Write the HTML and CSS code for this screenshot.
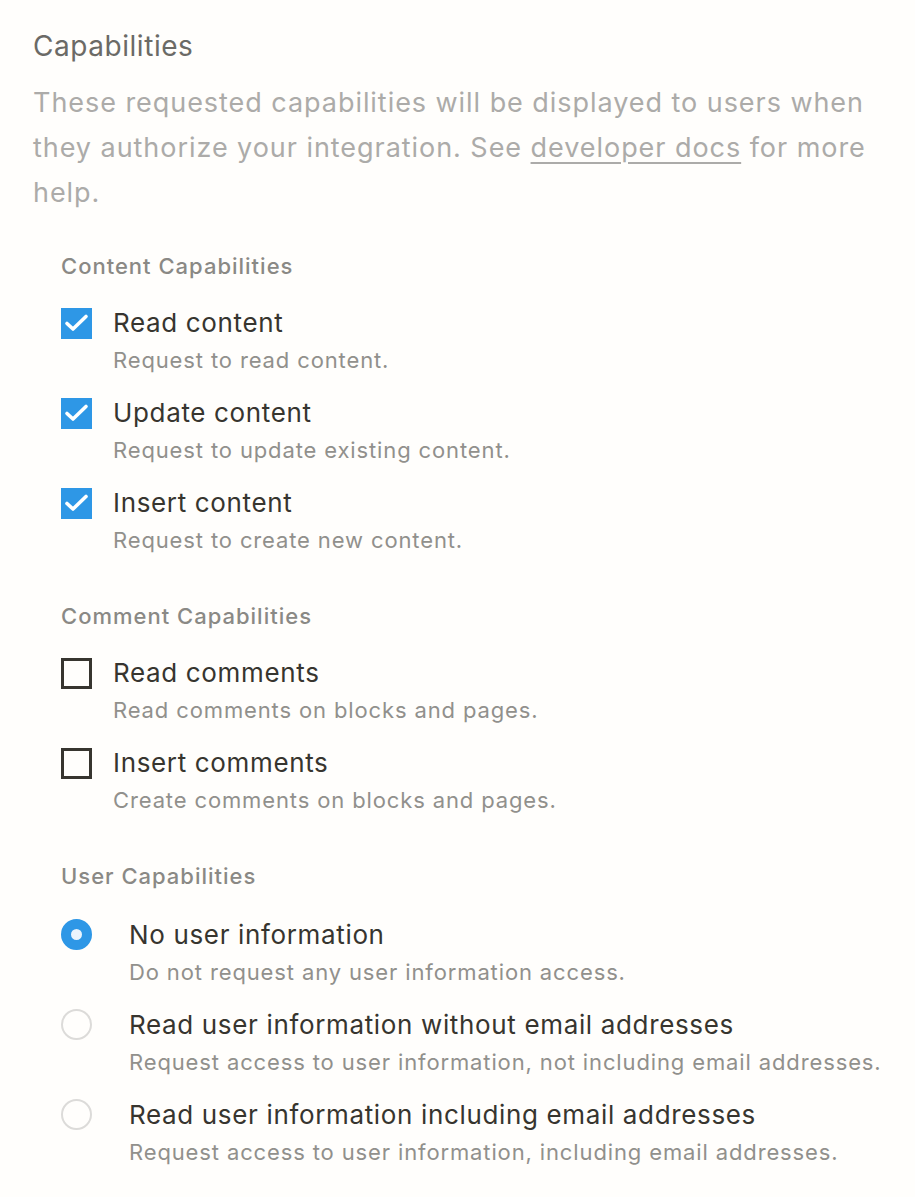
FILE: index.html
```html
<!DOCTYPE html>
<html>
<head>
<meta charset="utf-8">
<link rel="stylesheet" href="styles.css">
</head>
<body>
<div class="page">
  <div class="title">Capabilities</div>
  <p class="intro">These requested capabilities will be displayed to users when they authorize your integration. See <a class="link" href="#">developer docs</a> for more help.</p>

  <div class="section">
    <div class="section-title">Content Capabilities</div>
    <div class="option">
      <span class="box checked"><svg viewBox="0 0 31 31" width="31" height="31"><path d="M6 15.5l6 5.5 13-12.5" fill="none" stroke="#fff" stroke-width="3.6" stroke-linecap="round" stroke-linejoin="round"/></svg></span>
      <div class="text"><div class="label">Read content</div><div class="desc">Request to read content.</div></div>
    </div>
    <div class="option">
      <span class="box checked"><svg viewBox="0 0 31 31" width="31" height="31"><path d="M6 15.5l6 5.5 13-12.5" fill="none" stroke="#fff" stroke-width="3.6" stroke-linecap="round" stroke-linejoin="round"/></svg></span>
      <div class="text"><div class="label">Update content</div><div class="desc">Request to update existing content.</div></div>
    </div>
    <div class="option">
      <span class="box checked"><svg viewBox="0 0 31 31" width="31" height="31"><path d="M6 15.5l6 5.5 13-12.5" fill="none" stroke="#fff" stroke-width="3.6" stroke-linecap="round" stroke-linejoin="round"/></svg></span>
      <div class="text"><div class="label">Insert content</div><div class="desc">Request to create new content.</div></div>
    </div>
  </div>

  <div class="section">
    <div class="section-title">Comment Capabilities</div>
    <div class="option">
      <span class="box"></span>
      <div class="text"><div class="label">Read comments</div><div class="desc">Read comments on blocks and pages.</div></div>
    </div>
    <div class="option">
      <span class="box"></span>
      <div class="text"><div class="label">Insert comments</div><div class="desc">Create comments on blocks and pages.</div></div>
    </div>
  </div>

  <div class="section">
    <div class="section-title">User Capabilities</div>
    <div class="option radio-option">
      <span class="radio selected"></span>
      <div class="text"><div class="label">No user information</div><div class="desc">Do not request any user information access.</div></div>
    </div>
    <div class="option radio-option">
      <span class="radio"></span>
      <div class="text"><div class="label">Read user information without email addresses</div><div class="desc">Request access to user information, not including email addresses.</div></div>
    </div>
    <div class="option radio-option">
      <span class="radio"></span>
      <div class="text"><div class="label">Read user information including email addresses</div><div class="desc">Request access to user information, including email addresses.</div></div>
    </div>
  </div>
</div>
</body>
</html>
```

FILE: styles.css
```css
html, body {
  margin: 0;
  padding: 0;
  background: #fffefc;
}
body {
  font-family: Inter, "Noto Sans", "Liberation Sans", sans-serif;
  color: #37352f;
}
.page {
  padding: 28px 33px 0 33px;
}
.title {
  font-size: 28px;
  line-height: 36px;
  letter-spacing: 0.55px;
  color: #6b6a66;
}
.intro {
  margin: 16px 0 36px 0;
  font-size: 27px;
  line-height: 45px;
  letter-spacing: 0.95px;
  color: #acaba9;
}
.link {
  color: #acaba9;
  text-decoration: underline;
  text-decoration-thickness: 2px;
  text-underline-offset: 5px;
}
.section {
  padding-left: 28px;
  margin-top: 25px;
}
.section-title {
  font-size: 22px;
  line-height: 30px;
  letter-spacing: 1px;
  color: #8a8985;
  font-weight: 500;
  margin-bottom: 25px;
}
.option {
  display: flex;
  align-items: flex-start;
  gap: 21px;
  height: 90px;
}
.radio-option {
  gap: 37px;
}
.box {
  flex: none;
  width: 31px;
  height: 31px;
  box-sizing: border-box;
  border: 3px solid #37352f;
  margin-top: 2px;
}
.box.checked {
  border: none;
  background: #2e97e6;
}
.box svg {
  display: block;
}
.radio {
  flex: none;
  width: 31px;
  height: 31px;
  box-sizing: border-box;
  border-radius: 50%;
  border: 2px solid #dcdbd9;
  margin-top: 3px;
}
.radio.selected {
  border: 10px solid #2e97e6;
  background: #eaf4fd;
}
.label {
  font-size: 26px;
  line-height: 34px;
  letter-spacing: 0.65px;
  white-space: nowrap;
}
.desc {
  font-size: 22px;
  line-height: 30px;
  letter-spacing: 0.87px;
  margin-top: 5px;
  color: #91908c;
  white-space: nowrap;
}
.radio-option .label {
  margin-top: 2px;
}
```
